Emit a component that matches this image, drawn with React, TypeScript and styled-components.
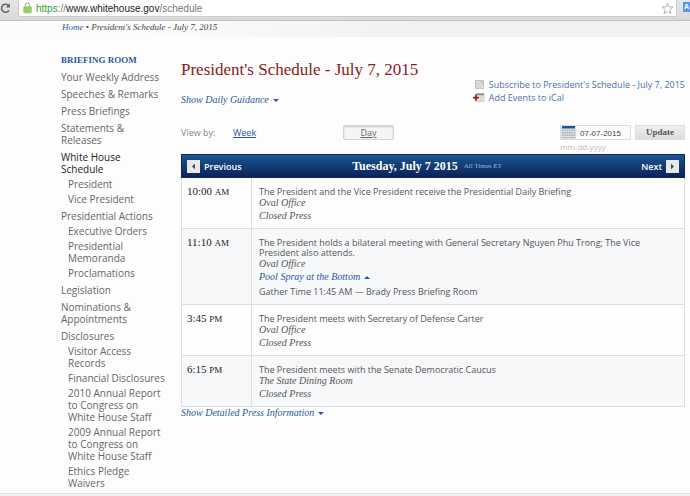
import React from "react";
import styled, { createGlobalStyle } from "styled-components";

const sans = '"Open Sans", "Noto Sans", sans-serif';
const serif = '"Liberation Serif", "Times New Roman", serif';

const Global = createGlobalStyle`
  * { box-sizing: border-box; }
  body { margin: 0; background: #fdfdfd; font-family: ${sans}; color: #555; }
  h1, h2, p, ul, fieldset { margin: 0; padding: 0; border: 0; }
  ul { list-style: none; }
  a { color: inherit; text-decoration: none; }
  button { font: inherit; color: inherit; margin: 0; padding: 0; border: 0; background: none; cursor: pointer; }
`;

const Page = styled.div`
  min-height: 100vh;
  display: flex;
  flex-direction: column;
  overflow: hidden;
`;

const BrowserBar = styled.header`
  display: flex;
  align-items: flex-start;
  height: 21px;
  background: linear-gradient(#e6e6e6, #d9d9d9);
  border-bottom: 1px solid #c2c2c2;
`;

const ReloadButton = styled.button`
  width: 18px;
  height: 16px;
  display: flex;
  align-items: center;
`;

const AddressField = styled.div`
  flex: 1;
  height: 17px;
  display: flex;
  align-items: center;
  padding: 0 2px 0 4px;
  background: #fff;
  border: 1px solid #ccc;
  border-top: 0;
  border-radius: 0 0 2px 2px;
`;

const Address = styled.div`
  flex: 1;
  margin-left: 4px;
  padding-top: 1px;
  font: 10px/16px "Liberation Sans", Arial, sans-serif;
  color: #777;
`;
const Secure = styled.span`color: #2f9e3a;`;
const Domain = styled.span`color: #222;`;

const Extension = styled.button`
  width: 7px;
  height: 10px;
  margin: 2px 0 0 6px;
  overflow: hidden;
  background: #5797ee;
  color: #fff;
  font: bold 7px/10px "Liberation Sans", Arial, sans-serif;
`;

const Breadcrumb = styled.nav`
  height: 16px;
  padding-left: 62px;
  background: linear-gradient(90deg, #fdfdfd 0, #fbfbfb 25%, #f1f1f1 60%);
  font: italic 9px/12px ${serif};
  color: #444;
`;

const HomeText = styled.span`
  color: #2a5a9b;
`;

const Columns = styled.div`
  flex: 1;
  display: flex;
  padding: 17px 5px 4px 61px;
`;

const Sidebar = styled.nav`
  flex: 0 0 120px;
  font-size: 10px;
  line-height: 12px;
  color: #666;
`;

const SidebarTitle = styled.h2`
  font: bold 9px/13px ${serif};
  color: #2a5a9b;
`;

const NavItem = styled.li<{ $wide?: boolean }>`
  width: ${(p) => (p.$wide ? 110 : 100)}px;
  margin-top: 5px;
`;
const SubItem = styled.li<{ $narrow?: boolean }>`
  width: ${(p) => (p.$narrow ? 74 : 98)}px;
  margin: 3px 0 0 7px;
`;
const NavList = styled.ul`
  margin-top: -1px;
`;
const NavLink = styled.a<{ $current?: boolean }>`
  color: ${(p) => (p.$current ? "#222" : "inherit")};
`;

const Main = styled.main`
  flex: 1;
  min-width: 0;
  padding-top: 1px;
`;

const Heading = styled.div`
  display: flex;
  justify-content: space-between;
  height: 70px;
`;

const Title = styled.h1`
  margin-top: 5px;
  font: 17px/20px ${serif};
  color: #8b1a1a;
  white-space: nowrap;
`;

const Toggle = styled.button<{ $gap?: number }>`
  display: flex;
  align-items: center;
  gap: 4px;
  margin-top: ${(p) => p.$gap ?? 0}px;
  font: italic 10px/12px ${serif};
  color: #2a5a9b;
`;

const Caret = styled.span<{ $up?: boolean }>`
  border: 3px solid transparent;
  border-top: ${(p) => (p.$up ? "0" : "3px solid currentColor")};
  border-bottom: ${(p) => (p.$up ? "3px solid currentColor" : "0")};
`;

const FeedList = styled.ul`
  margin-top: 23px;
  font-size: 9px;
  line-height: 13px;
  color: #4a72a8;
  white-space: nowrap;
`;
const FeedLink = styled.a`
  display: flex;
  align-items: center;
  gap: 4px;
`;

const Toolbar = styled.div`
  display: flex;
  align-items: flex-start;
  height: 29px;
  font-size: 9px;
  line-height: 14px;
`;

const ViewLabel = styled.span`
  width: 52px;
  margin-top: 1px;
  color: #888;
`;
const ViewSlot = styled.div`
  flex: 0 0 110px;
`;
const ViewButton = styled.button<{ $pressed?: boolean }>`
  height: 15px;
  width: ${(p) => (p.$pressed ? "51px" : "auto")};
  border: ${(p) => (p.$pressed ? "1px solid #d2d2d2" : "0")};
  border-radius: 2px;
  background: ${(p) => (p.$pressed ? "#f5f5f5" : "transparent")};
  box-shadow: ${(p) => (p.$pressed ? "inset 0 1px 2px #ccc" : "none")};
  color: ${(p) => (p.$pressed ? "#666" : "#2a5a9b")};
  text-decoration: underline;
`;

const DateForm = styled.form`
  display: flex;
  align-items: flex-start;
  gap: 4px;
  margin-left: auto;
`;
const DateLabel = styled.label`
  display: block;
  font-size: 8px;
  line-height: 14px;
  color: #bbb;
`;
const DateBox = styled.div`
  display: flex;
  width: 71px;
  height: 15px;
  border: 1px solid #ddd;
  background: #fbfbfb;
`;
const DateInput = styled.input`
  flex: 1;
  min-width: 0;
  border: 0;
  padding: 3px 0 0 4px;
  background: transparent;
  font: 8px/10px "Liberation Sans", Arial, sans-serif;
  color: #444;
`;
const UpdateButton = styled.button`
  width: 50px;
  height: 15px;
  border: 1px solid #ddd;
  background: linear-gradient(#efefef, #dcdcdc);
  font: bold 9px/13px ${serif};
  color: #555;
`;

const DayBar = styled.div`
  display: grid;
  grid-template-columns: 1fr auto 1fr;
  align-items: center;
  height: 24px;
  padding: 0 5px;
  border: 1px solid #0b2857;
  background: linear-gradient(#1c5591, #0a2358);
  color: #fff;
  font-size: 9px;
  font-weight: 600;
`;
const PageButton = styled.button<{ $end?: boolean }>`
  display: flex;
  align-items: center;
  gap: 4px;
  justify-self: ${(p) => (p.$end ? "end" : "start")};
`;
const ArrowBox = styled.span`
  width: 13px;
  height: 13px;
  display: grid;
  place-items: center;
  background: #e8e8e8;
`;
const DayTitle = styled.h2`
  display: flex;
  align-items: center;
  gap: 6px;
  padding-right: 12px;
  font: bold 12px/14px ${serif};
`;
const ZoneNote = styled.small`
  font: 7px/10px ${serif};
  color: #a0b6d2;
`;

const Schedule = styled.table`
  width: 100%;
  border-collapse: collapse;
  border: 1px solid #dedede;
  border-top: 0;
`;
const Slot = styled.tr`
  border-bottom: 1px solid #dedede;
  &:nth-child(even) { background: #f6f8fa; }
`;
const Time = styled.th`
  width: 70px;
  padding: 7px 0 0 5px;
  border-right: 1px solid #dedede;
  text-align: left;
  vertical-align: top;
  font: 11px/12px ${serif};
  color: #222;
`;
const Meridiem = styled.span`font-size: 9px;`;
const Details = styled.td`
  padding: 9px 40px 6px 7px;
  vertical-align: top;
  font-size: 9px;
  line-height: 10px;
`;
const Note = styled.p`
  font: italic 10px/12px ${serif};
  color: #555;
  & + & { margin-top: 1px; }
`;
const Gather = styled.p`
  margin-top: 3px;
  line-height: 12px;
`;
const BottomEdge = styled.footer`
  height: 4px;
  background: #f1f1f1;
  border-top: 1px solid #e2e2e2;
`;

type NavEntry = { text: string; current?: boolean; wide?: boolean; children?: { text: string; narrow?: boolean }[] };

const navigation: NavEntry[] = [
  { text: "Your Weekly Address", wide: true },
  { text: "Speeches & Remarks" },
  { text: "Press Briefings" },
  { text: "Statements & Releases" },
  { text: "White House Schedule", current: true, children: [{ text: "President" }, { text: "Vice President" }] },
  {
    text: "Presidential Actions",
    children: [{ text: "Executive Orders" }, { text: "Presidential Memoranda" }, { text: "Proclamations" }],
  },
  { text: "Legislation" },
  { text: "Nominations & Appointments" },
  {
    text: "Disclosures",
    children: [
      { text: "Visitor Access Records" },
      { text: "Financial Disclosures" },
      { text: "2010 Annual Report to Congress on White House Staff" },
      { text: "2009 Annual Report to Congress on White House Staff" },
      { text: "Ethics Pledge Waivers", narrow: true },
    ],
  },
];

const events = [
  { time: "10:00", half: "AM", text: "The President and the Vice President receive the Presidential Daily Briefing", place: "Oval Office", press: "Closed Press" },
  {
    time: "11:10", half: "AM",
    text: "The President holds a bilateral meeting with General Secretary Nguyen Phu Trong; The Vice President also attends.",
    place: "Oval Office", spray: "Pool Spray at the Bottom", gather: "Gather Time 11:45 AM — Brady Press Briefing Room",
  },
  { time: "3:45", half: "PM", text: "The President meets with Secretary of Defense Carter", place: "Oval Office", press: "Closed Press" },
  { time: "6:15", half: "PM", text: "The President meets with the Senate Democratic Caucus", place: "The State Dining Room", press: "Closed Press" },
];

const ReloadIcon = () => (
  <svg width="12" height="12" viewBox="0 0 12 12" fill="none" stroke="#666" strokeWidth="1.6">
    <path d="M8.8 4A4 4 0 1 0 9 8.3" />
    <path d="M10 1.2v4.3H5.8z" fill="#666" stroke="none" />
  </svg>
);
const LockIcon = () => (
  <svg width="9" height="12" viewBox="0 0 9 12">
    <path d="M2.3 5.5V3.2a2.2 2.2 0 0 1 4.4 0v2.3" fill="none" stroke="#b5b5b5" strokeWidth="1.2" />
    <rect x=".7" y="4.8" width="7.6" height="6" rx=".8" fill="#95d262" stroke="#7dbb4b" strokeWidth=".6" />
  </svg>
);
const StarIcon = () => (
  <svg width="13" height="13" viewBox="0 0 13 13">
    <path d="M6.5 1l1.5 3.8 4 .2-3.1 2.6 1.1 4-3.5-2.2L3 11.6l1.1-4L1 5l4-.2z" fill="#fff" stroke="#aaa" strokeWidth=".9" strokeLinejoin="round" />
  </svg>
);
const FeedIcon = () => (
  <svg width="11" height="11" viewBox="0 0 11 11">
    <rect x="1" y="1" width="9" height="9" fill="#c6c6c6" />
    <path d="M2.5 3a5.5 5.5 0 0 1 5.8 5.8M2.5 5.4A3.3 3.3 0 0 1 6 8.8" fill="none" stroke="#fff" strokeWidth="1" />
    <circle cx="3.2" cy="8.2" r=".8" fill="#fff" />
  </svg>
);
const CalendarAddIcon = () => (
  <svg width="11" height="11" viewBox="0 0 11 11" overflow="visible">
    <rect x="2" y="1.5" width="8" height="8" fill="#eee" stroke="#bbb" strokeWidth=".7" />
    <path d="M2 2.5h8" stroke="#888" strokeWidth="1.6" />
    <path d="M5.5 5.5h4M5.5 7.5h4M6.5 4v5M8.5 4v5" stroke="#c4c4c4" strokeWidth=".5" />
    <path d="M-1 5.7h6M2 2.7v6" stroke="#a51620" strokeWidth="1.7" />
  </svg>
);
const CalendarIcon = () => (
  <svg width="15" height="13" viewBox="0 0 15 13">
    <rect width="15" height="13" fill="#dfe1e4" />
    <path d="M1 0h13v2.5H1z" fill="#17569c" />
    <path d="M1.2 4.4h13M1.2 6.8h13M1.2 9.2h13M1.2 11.6h13" stroke="#a9adb3" strokeWidth="1.4" strokeDasharray="1.5 .8" />
  </svg>
);
const Arrow = ({ right }: { right?: boolean }) => (
  <svg width="5" height="7" viewBox="0 0 5 7">
    <path d={right ? "M1 .8l3 2.7-3 2.7z" : "M4 .8L1 3.5l3 2.7z"} fill="#444" />
  </svg>
);

export default function App() {
  return (
    <Page>
      <Global />
      <BrowserBar>
        <ReloadButton aria-label="Reload"><ReloadIcon /></ReloadButton>
        <AddressField>
          <LockIcon />
          <Address><Secure>https</Secure>://<Domain>www.whitehouse.gov</Domain>/schedule</Address>
          <StarIcon />
        </AddressField>
        <Extension>A</Extension>
      </BrowserBar>
      <Breadcrumb><NavLink href="#home"><HomeText>Home</HomeText></NavLink> • President's Schedule - July 7, 2015</Breadcrumb>
      <Columns>
        <Sidebar>
          <SidebarTitle>BRIEFING ROOM</SidebarTitle>
          <NavList>
            {navigation.map((item) => (
              <React.Fragment key={item.text}>
                <NavItem $wide={item.wide}><NavLink href="#section" $current={item.current}>{item.text}</NavLink></NavItem>
                {item.children?.map((sub) => (
                  <SubItem key={sub.text} $narrow={sub.narrow}><NavLink href="#section">{sub.text}</NavLink></SubItem>
                ))}
              </React.Fragment>
            ))}
          </NavList>
        </Sidebar>
        <Main>
          <Heading>
            <div>
              <Title>President's Schedule - July 7, 2015</Title>
              <Toggle $gap={14}>Show Daily Guidance <Caret /></Toggle>
            </div>
            <FeedList>
              <li><FeedLink href="#feed"><FeedIcon />Subscribe to President's Schedule - July 7, 2015</FeedLink></li>
              <li><FeedLink href="#ical"><CalendarAddIcon />Add Events to iCal</FeedLink></li>
            </FeedList>
          </Heading>
          <Toolbar>
            <ViewLabel>View by:</ViewLabel>
            <ViewSlot><ViewButton>Week</ViewButton></ViewSlot>
            <ViewButton $pressed>Day</ViewButton>
            <DateForm onSubmit={(e) => e.preventDefault()}>
              <div>
                <DateBox><CalendarIcon /><DateInput id="day" defaultValue="07-07-2015" /></DateBox>
                <DateLabel htmlFor="day">mm-dd-yyyy</DateLabel>
              </div>
              <UpdateButton>Update</UpdateButton>
            </DateForm>
          </Toolbar>
          <DayBar>
            <PageButton><ArrowBox><Arrow /></ArrowBox>Previous</PageButton>
            <DayTitle>Tuesday, July 7 2015 <ZoneNote>All Times ET</ZoneNote></DayTitle>
            <PageButton $end>Next<ArrowBox><Arrow right /></ArrowBox></PageButton>
          </DayBar>
          <Schedule>
            <tbody>
              {events.map((e) => (
                <Slot key={e.time}>
                  <Time scope="row">{e.time} <Meridiem>{e.half}</Meridiem></Time>
                  <Details>
                    <p>{e.text}</p>
                    <Note>{e.place}</Note>
                    {e.press && <Note>{e.press}</Note>}
                    {e.spray && <Toggle $gap={1}>{e.spray} <Caret $up /></Toggle>}
                    {e.gather && <Gather>{e.gather}</Gather>}
                  </Details>
                </Slot>
              ))}
            </tbody>
          </Schedule>
          <Toggle>Show Detailed Press Information <Caret /></Toggle>
        </Main>
      </Columns>
      <BottomEdge />
    </Page>
  );
}
